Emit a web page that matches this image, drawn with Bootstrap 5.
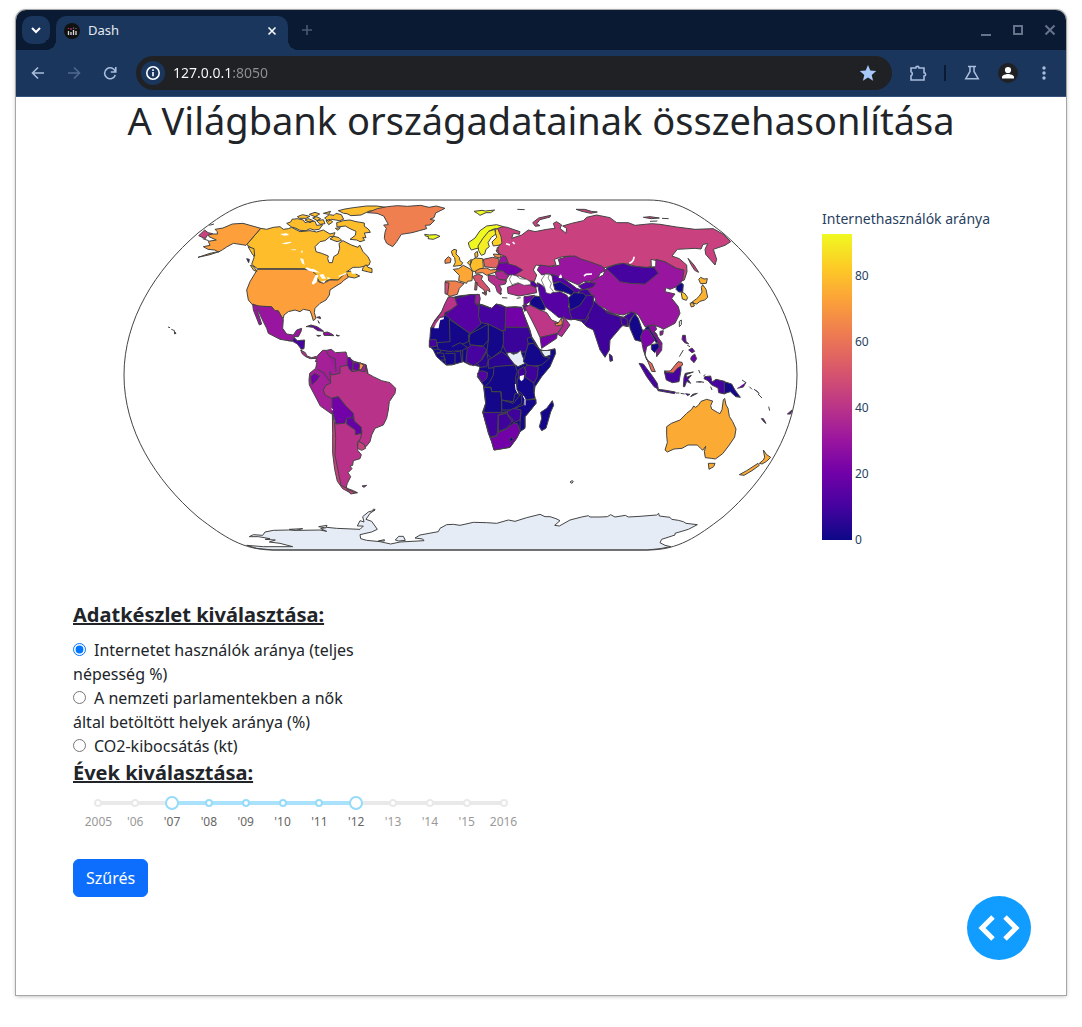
<!DOCTYPE html>
<html lang="hu">
<head>
<meta charset="utf-8">
<meta name="viewport" content="width=device-width, initial-scale=1">
<title>Dash</title>
<link href="https://cdn.jsdelivr.net/npm/bootstrap@5.3.0/dist/css/bootstrap.min.css" rel="stylesheet">
<style>
body{font-family:"Noto Sans",sans-serif;background:#fff}
.page-frame{min-height:100vh;padding:10px 16px 32px}
.browser{border-radius:10px 10px 0 0;box-shadow:0 0 0 1px #a6a6a6,0 1px 4px #0005}
.tabstrip{height:40px;background:#0a1a33;border-radius:10px 10px 0 0;padding-right:8px}
.tabstrip button,.toolbar button{border:0;background:none;padding:0;display:flex;align-items:center;justify-content:center;flex:none}
.tabstrip .tab-search{width:28px;height:28px;border-radius:10px;background:#1b365d;margin:0 6px}
.site-tab{position:relative;width:232px;height:34px;background:#1b365d;border-radius:10px 10px 0 0;color:#e3e9f3;font-size:13px;padding:0 8px 5px;align-self:flex-end}
.site-tab::before,.site-tab::after{content:"";position:absolute;bottom:0;width:10px;height:10px}
.site-tab::before{left:-10px;background:radial-gradient(circle at 0 0,#0a1a33 10px,#1b365d 10px)}
.site-tab::after{right:-10px;background:radial-gradient(circle at 100% 0,#0a1a33 10px,#1b365d 10px)}
.sq16{width:16px;height:16px}
.sq20{width:20px;height:20px}
.sq24{width:24px;height:24px}
.win-controls{gap:16px}
.toolbar{height:47px;background:#1b365d;border-bottom:1px solid #35507a;padding:0 12px 0 10px}
.nav-buttons{gap:12px;margin-right:14px}
.omnibox{height:34px;border-radius:17px;background:#202124;padding:0 12px 0 5px}
.omnibox .site-info{width:24px;height:24px;border-radius:50%;background:#1b365d}
.omnibox input{border:0;outline:0;font-size:14px;line-height:20px;padding:0;margin-left:8px;min-width:0;color:transparent;background:linear-gradient(90deg,#fff 60px,#8d9094 60px);-webkit-background-clip:text;background-clip:text}
.actions{gap:16px;margin-left:16px}
.divider{width:2px;height:16px;background:#0a1a33}
.app-title{font-size:38px;line-height:46px}
.chart-row{padding:47px 78px 0 104px;gap:22px}
.world{min-width:0;height:auto;display:block}
.legend-col{width:166px;flex:none;padding-top:19px;color:#2a3f5f}
.legend-title{font-size:14px;line-height:20px;white-space:nowrap}
.scale{height:306px;margin-top:5px}
.scale-bar{width:30px;background:linear-gradient(0deg,#0d0887,#46039f 11.1%,#7201a8 22.2%,#9c179e 33.3%,#bd3786 44.4%,#d8576b 55.6%,#ed7953 66.7%,#fb9f3a 77.8%,#fdca26 88.9%,#f0f921)}
.ticks{font-size:12px;margin:0 0 -33px 3px;line-height:66px}
.controls{padding:43px 57px 98px}
.group-title{font-size:20px;line-height:24px;font-weight:700;text-decoration:underline}
.options{padding:3px 0}
.dataset{max-width:293px}
.dataset input{margin:0 8px 0 0;width:13px;height:13px}
.years{position:relative;max-width:442px;margin:10px 0 0 7px}
.rail,.rail-on,.years input{position:absolute}
.rail{left:4.1667%;right:4.1667%;top:6px;height:4px;background:#e9e9e9}
.rail-on{left:20.8333%;width:41.6667%;top:6px;height:4px;background:#abe2fb}
.years input{appearance:none;left:calc(4.1667% - 7px);width:calc(91.6667% + 14px);top:1px;height:14px;background:none;margin:0;pointer-events:none}
.years input::-webkit-slider-thumb{appearance:none;pointer-events:auto;width:14px;height:14px;border:2px solid #96dbfa;border-radius:50%;background:#fff}
.year{position:relative;flex:1;text-align:center;font-size:12px;line-height:20px;color:#999;padding-top:4px}
.year::before{content:"";display:block;width:8px;height:8px;border:2px solid #e9e9e9;border-radius:50%;background:#fff;margin:0 auto 5px}
.year.on{color:#666}.year.on::before{border-color:#96dbfa}
.filter-btn{margin-top:27px}
.debug-btn{position:absolute;right:35px;bottom:35px;width:64px;height:64px;background:#119dff}
</style>
<script src="https://cdn.jsdelivr.net/npm/bootstrap@5.3.0/dist/js/bootstrap.bundle.min.js"></script>
</head>
<body>
<div class="page-frame d-flex flex-column">
<div class="browser flex-fill d-flex flex-column position-relative">
<header>
 <div class="tabstrip d-flex align-items-center">
  <button class="tab-search" aria-label="Lapok keresése"><svg width="12" height="12" fill="none" stroke="#fff" stroke-width="2"><path d="M2 4l4 4 4-4"/></svg></button>
  <div class="site-tab d-flex align-items-center">
   <svg class="sq16" viewBox="0 0 16 16"><circle cx="8" cy="8" r="8" fill="#111"/><path d="M4.500 8v4M7 9v3M9.500 7v5M12 8v4" stroke="#ddd" stroke-width="1.300"/><path d="M4.500 5v1M7 5v2" stroke="#b0306f" stroke-width="1.300"/><path d="M9.500 4.500v1.300M12 5v1" stroke="#777" stroke-width="1.200"/></svg>
   <span class="ms-2 me-auto">Dash</span>
   <button class="sq16" aria-label="Lap bezárása"><svg width="10" height="10" stroke="#f2f5fa" stroke-width="1.700"><path d="M1.500 1.500l7 7M8.500 1.500l-7 7"/></svg></button>
  </div>
  <button class="sq20 ms-2 me-auto" aria-label="Új lap"><svg width="24" height="12" viewBox="-1 0 12 12" stroke="#4a5a75" stroke-width="1.600"><path d="M1 6h10M6 1v10"/></svg></button>
  <div class="d-flex win-controls">
   <button class="sq16" aria-label="Kis méret"><svg width="16" height="16"><path d="M3 12h10v2H3z" fill="#66748a"/></svg></button>
   <button class="sq16" aria-label="Teljes méret"><svg width="16" height="16" fill="none" stroke="#66748a" stroke-width="2"><path d="M4 4h8v8H4z"/></svg></button>
   <button class="sq16" aria-label="Bezárás"><svg width="16" height="16" stroke="#66748a" stroke-width="2"><path d="M3.500 3.500l9 9M12.500 3.500l-9 9"/></svg></button>
  </div>
 </div>
 <div class="toolbar d-flex align-items-center">
  <div class="d-flex nav-buttons">
   <button class="sq24" aria-label="Vissza"><svg width="16" height="16" fill="none" stroke="#a9bddc" stroke-width="1.600"><path d="M14 8H3M8 2.500L2.500 8 8 13.500"/></svg></button>
   <button class="sq24" aria-label="Előre"><svg width="16" height="16" fill="none" stroke="#4f688f" stroke-width="1.600"><path d="M2 8h11M8 2.500L13.500 8 8 13.500"/></svg></button>
   <button class="sq24" aria-label="Újratöltés"><svg width="16" height="16" fill="none" stroke="#a9bddc" stroke-width="1.600"><path d="M13.300 6.500A5.500 5.500 0 1 0 13.300 10M13.800 2v5h-5"/></svg></button>
  </div>
  <div class="omnibox d-flex align-items-center flex-fill">
   <button class="site-info" aria-label="Webhely adatai"><svg width="16" height="16" fill="none" stroke="#fff" stroke-width="1.600"><circle cx="8" cy="8" r="6.200"/><path d="M8 7v4.200M8 4.300v1.600"/></svg></button>
   <input class="flex-fill" type="text" value="127.0.0.1:8050" aria-label="Cím">
   <button class="sq24" aria-label="Könyvjelző"><svg width="18" height="18" viewBox="0 0 18 18"><path d="M9 1l2.300 5.500 5.900.5-4.500 3.900 1.400 5.800L9 13.600l-5.100 3.100 1.400-5.800L.8 7l5.900-.5z" fill="#a8c7fa"/></svg></button>
  </div>
  <div class="d-flex align-items-center actions">
   <button class="sq20" aria-label="Bővítmények"><svg width="18" height="18" fill="none" stroke="#a9bddc" stroke-width="1.600"><path d="M2 4h4.800a1.600 1.600 0 0 1 3.200 0h5v4.800a1.600 1.600 0 0 1 0 3.200v4H2v-4.200a2.200 2.200 0 0 0 0-4z"/></svg></button>
   <span class="divider"></span>
   <button class="sq20" aria-label="Kísérletek"><svg width="16" height="16" fill="none" stroke="#a9bddc" stroke-width="1.500"><path d="M4 1.500h8M6 1.500v5L1.800 13.700h12.400L10 6.500v-5"/></svg></button>
   <button class="sq20" aria-label="Profil"><svg width="20" height="20"><circle cx="10" cy="10" r="10" fill="#202124"/><circle cx="10" cy="7" r="3.100" fill="#fff"/><path d="M4 15.500V14c0-2 4-3 6-3s6 1 6 3v1.500z" fill="#fff"/></svg></button>
   <button class="sq20" aria-label="Menü"><svg width="6" height="16" fill="#a9bddc"><circle cx="3" cy="3" r="1.700"/><circle cx="3" cy="8" r="1.700"/><circle cx="3" cy="13" r="1.700"/></svg></button>
  </div>
 </div>
</header>
<main class="flex-fill">
 <h1 class="app-title text-center fw-normal m-0">A Világbank országadatainak összehasonlítása</h1>
 <section class="chart-row d-flex">
 <svg class="world flex-fill" viewBox="0 0 2040 1110" fill="#14078a" stroke="#444" stroke-width="3" stroke-linejoin="round" role="img" aria-label="Internethasználók aránya világtérkép">
 <!-- North America -->
 <g transform="translate(480)">
  <path fill="#febd2a" d="M-58 115l18 3 20-6 20-2 10 8 15-2 10-4 25 13 30-3 20 4 20-6 20 12 15-4-5 12h-10l-15 12-15 3-15 15 3 15 17 5 20 8-2 8 4 12h10l4-18 13-8 5-17-2-15 12-8 15 8 10 5 20 7 5-7 10 20 15 15 7 15-4 10-28 7h-20l-20 14 30-6-2 12 12 6-15 6-20-4-15-2-15 12-25-2-20 10-10-2-10-16-35-24H-68l-17-13 7-20-2-25-20-14z"/>
  <path fill="#fd9f3a" d="M-68 238H75l20 4 15 13 5 20 15 5 20-10 25 0 15-15 10-5 5 12-15 10-5 6-20 12-15 10-2 15-10 15-18 10-15 15-2 13 5 17-8 7-5-17-5-13-20-4-10 7-15-5-20 5-13 10-2 10-7-7-8-10-7-6-6 3-7-13-15-2h-15l-27-5-13-15-5-30 10-25 15-25z"/>
  <g fill="#febd2a"><path d="M20 100l12-4 4-8 16-2 18 4 5 8 14-4 16 0 5 12 18-2-10 14-16 2-12-4-12 6-18-1-12-6-13-4zM75 90l10-4 15 6-10 6zM110 92l20-3 5 12-15 2zM138 92l12-4 8 8-12 8zM52 80l16-6 22 5-12 6-20 0zM88 73l17-6 14 5-14 8zM98 84l12-4 12 6-10 6zM130 70l22-6-6 9zM134 84l14-10 14 2 6-6 16 4 7 14-12 4-24-4-10 6zM175 62l20-5 25-4 40-5 30 0 28 4-30 10-20 1-25 12-30 2-12-6-10-1zM170 98l20-6 20-2 18 5 25 4 0 10 12 8 6 10-18 2 5 14-10 0 6 8-14 4-10-5-20-2 16-12 2-12-18-8-14-8-25 3zM150 147l12-8 15 4 8 8-14 4zM250 232l8-8 6 8 12 4 0 12-10-2-20-5zM166 115l15-2-7 8z"/></g>
  <g stroke="none" fill="#fff"><path d="M0 132l20-2 8 5-16 2zM5 160l25-5 5 3-20 5zM28 180l20-3-2 4zM68 180l-6 5 5 5zM60 205l10 2 4 18-8-5zM76 236l5-4 25 10-8 4zM80 240l20-4 20 12-16-2-15-3zM95 280l12-26 8 2-5 20-10 8zM118 254l12-2 8 14-12 0zM122 275l16-4-6 8zM140 262l14 2-10 4zM212 240l20-7 14 4-10 14-20 0zM176 257l25-10-3 6-22 8z"/></g>
  <path fill="#f07f4f" d="M262 68l30-12 30-6 30-3 30 2 40-3 25 6 22-4 26 7-28 14-5 14-12 5 14 3-14 14-14 1 4 10-22 6-22 6-32 5-14 22-12 15-18-10-7-15 2-18 4-12-8-10 14-1-4-8-10-18-20-8z"/>
  <path fill="#eff821" d="M434 133l14 2 20-1 12 5-20 9-16-2 2-6-10-2z"/>
  <g fill="#46039f"><path fill="#6a00a8" d="M78 410l15-5 18 5 14 9 6 5-18-2-14-10-15-2z"/><path fill="#8f0da4" d="M130 428l12-2 12 5 8 6-30-1zM110 436l10 1-5 2zM168 435l10 2-6 1zM110 382l10-2 2 6zM114 392l4 8z"/>
  <path d="M20 450l20-10 12 12 22-2-2 26-8 2-12-16-14-8-14-2z"/><path fill="#b52f8c" d="M62 480l14 8 5 10 14 5 14-4 2 6-20 1-14-6-10-8z"/></g>
 </g>
 <path fill="#fd9f3a" d="M422 115l-44 51-18-3-20-3-20 11-12 8-12 7-12-6-20-2-14-8 20-4-5-12 24-4-22-10-2-8 28 0-2-8-6-6 24-4 28-12 32-2zM270 190l-36 12 36-8 30-10z"/>
 <path fill="#98159f" d="M398 342l17 6 40 2 10 12h10l10 18 5 8-2 27 12 17 20 3 10-15 15-5-2 10-8 15h-13l-4 12h-13l-25-4-35-18-5-15-15-30-13-30 3 15 10 32-7 3-10-25-8-20z"/>
 <path fill="#c9427f" d="M236 137l18-17 10 8 14 3-16 5-6 10z"/>
 <path d="M268 106l14-4M248 146l18 6M144 411l6 2M154 418l10 4M163 424l5 6-4 2zM380 206l8 2-2 10z"/>
 <path fill="#febd2a" d="M391 226l8 2 12 16-10-3zM384 170l18 6 2 22-6-4z"/>
 <!-- South America -->
 <g transform="translate(510 420)">
  <path fill="#a51f99" d="M76 95l8-20 14-14 12 0 14-3 12 10 32-2 4 15 20 13 36 10 6 26-84 30-20 75-5 17-34-24-33-63-1-15 2-20 18-15 4-20z"/>
  <path fill="#a01a9c" d="M108 63l10 16 18 8 2 38M82 118l20 10 20 30"/>
  <path fill="#7201a8" d="M62 140l12-10 15 8-8 12-15 14z"/>
  <path fill="#b93289" d="M120 125l5 10 25-5v-20l25-5 10 20 20-3 20 3 3-20 4 25 18 10 25 12 25 6 17 17-2 15-17 25-3 25-5 25-10 20-25 10-10 20-5 20-12 15-23-18 10-22v-10l-23-30-2-20-25-25-20-25-20 5-20-10-5-15 8-15 14-5z"/>
  <path fill="#6a00a8" d="M172 84l8-2 10 18-4 22-8-4-6-14zM188 100l16-2 6 10-6 14-14-4z"/><path fill="#fa9b3d" d="M210 98l11 8-8 14-6-2z"/>
  <path fill="#c8417f" d="M127 250l7 30 6 40 0 50 8 50 8 42 18 14 16 6 12 6-22 0-22-12-16-22-8-36-6-48 0-60z"/>
  <path fill="#b93289" d="M134 278l40-2 20 20 22 8-4 20-10 18 2 20 10 12-4 12-20 6-2 14-8 2 6 8-12 12 8 12-10 20-4 14-15-8-8-40-10-50 2-50z"/>
  <path fill="#7201a8" d="M126 205l19-5 20 25 25 25 2 22-22-6-6 14-26 2-12-40z"/><path fill="#6600a7" d="M170 266l18-4 6 12 20 18 0 18-18 4 0-14-26-18z"/>
  <path fill="#c8417f" d="M204 333l18 10 5 12-12 6-12-6z"/>
  <path fill="#c8417f" d="M170 476l20 10 12 2-20 4z"/><path d="M216 468l14-2-8 6zM248 538h8M85 16l8 1M138 16l10 1" fill="#9c179e"/><path stroke="none" fill="#fff" d="M123 234l6 4-2 4z"/>
 </g>
 <!-- Africa -->
 <g transform="translate(900)">
  <path d="M85 322l15 0 15-4 35-4 25-1 5 12-2 17 12 3 25 10 13-13 17 3 13 7 27-2 20 2 5 18 20 50 5 20 10 15 13 23 17 5 30-7 2 14-17 40-25 30-20 30-3 20 6 30-20 25-13 15v30l-15 15-10 20-20 27-35 6-13 2-7-25-10-25-17-65 9-25-5-40-2-15-18-25 4-15 4-15-20-5h-10l-20-10-35 10H78l-28-25-10-20-12-12 2-28 2-25 13-25 20-25z"/>
  <path fill="#b93389" d="M86 320l14 2 12 4v19l-17 13-20 10-3 12-12 2-15 28-13 5 8-15 25-35 10-25z"/>
  <path fill="#fff" stroke="none" d="M60 384l12-2-1 6-10 2-3 12-2 13-14 0 6-14z"/>
  <path fill="#5601a4" d="M105 326l45-12h17l-2 26 10 8 3 37 5 17-33 28-15-10-60-45 20-17 17-13z"/>
  <path fill="#a01a9c" d="M167 315l11-2 2 12-4 20-11-7z"/>
  <path fill="#46039f" d="M178 344l37 11 13-13 30 10-3 70h-10l-40-20-22-4-8-18z"/>
  <path fill="#7201a8" d="M258 352h47l5 18 15 42h-69z"/><path fill="#3a049a" d="M256 412h69l10 28-10 20-5 25-20 3-40 2-12-25 2-25-5-18 11 0z"/>
  <path fill="#e5ecf6" d="M260 490l10-3 10 6 14-5 8-8 4 14 10 26-22 10-19-12z"/>
  <path d="M325 462l15-2 18 18 12 22 20 3-25 22-35 5-20-15 8-30zM322 445l10-4 26 36-18-17-16 0z"/><path fill="#e5ecf6" d="M362 482l30-1v14l-17 6z"/>
  <path d="M205 402l45 23v35l-5 20-30 25-15-15 5-40zM145 435l60-33v48l-15 18-40-3zM88 388l47 32 15 12-5 23-35 15-15 15-40-5-5-22 40-3zM75 490h30v32l-25 3M107 486l14-4 4 34M128 482v34"/>
  <path fill="#46039f" d="M142 475l13-10 35 5 10 10-20 35-20 12-22-12zM28 450l20-2 4 20-24 4z"/><path d="M50 488l20 2 6 20-14 0M96 470l24-12 22 14-16 10-26 2M40 478l20 0 2 8-12 6M62 500l10 0 6 24"/>
  <path fill="#2a0593" d="M200 485l5 25-5 20-20 2-8-12 13-10zM205 510l40-25 20 15 20 25-45 5-35 5z"/><path fill="#5302a3" d="M172 550l13-8 18 6-3 17-15 13z"/>
  <path d="M222 530l63-5 7 20-5 15 1 40 12 15-20 25-35-10-3-25h-27l-2-13h-21l18-17 10-20zM192 592h21l2 13h28l2 25v38h-55l7-28zM245 630l35 5 5-25 20 5v25l-30 20h-30zM292 565l26-5 24 20v28l3 17-25 5-15-20-15-10z"/>
  <path fill="#3f039c" d="M315 535l5-10 35 5-3 30-10 20-27-20 3-15zM295 540l17-10 6 15-5 15-18 2z"/>
  <path d="M315 630l33-2v12l-20 25-13 15v35l-15 10v-25l3-35-18-10 25-10z"/><path fill="#3f039c" d="M188 667h57l18-2-28 10-3 60-22 7-5-17zM235 675l25-5 20 20-20 25-25 10zM262 665l18-10 23 5-3 30-20 8-15-18z"/>
  <path fill="#7201a8" d="M210 742l20-2 2-12 26-10 22-18 12 0 8 25-10 20-20 27-35 6-13 2-7-25z"/><path d="M268 748l7-7 5 7-8 7zM397 632l4 14-9 20-14 49-13 7-7-12 7-25-3-18 18-12z"/>
  <path fill="#fff" stroke="none" d="M300 558l12-3-1 13-7 6-5-6z"/><path fill="none" stroke="#fff" d="M286 582l2 16 6 12M310 618l5 10 0 18"/>
  <!-- Europe -->
  <g>
  <path fill="#eff821" d="M145 158l20-14 15-22 20-14 30-4 20 6-4 8-22-2-18 8-12 24-8 24-18 4-14 4-6-10zM162 64l24-3 10 2 28-3-12 8-14 0-18 8-8-6z"/>
  <path fill="#f3ee24" d="M206 124l18-6 4 14-14 10-10 16 4 12-10 8-4 14-10 4-8-14-2-14 14-22z"/>
  <path fill="#fcd025" d="M226 118l16-4 6 8 2 20 10 14-12 8-28 4-4-12 14-14-4-14z"/>
  <path fill="#febd2a" d="M94 184l8-6 8 2-2 12 10 10 2 10 8 6-4 8-24 3 6-12-2-14-6-6zM156 210l10-6 22 2 2 26-10 12-22 0-8-16zM164 190l8-6 2 14-8 6zM142 218l12-10-4 18z"/>
  <path fill="#f48849" d="M75 210l10-10 8 6-2 12-16 2z"/><path fill="#fca636" d="M100 238l16-2 14-10 22 12 6 8-2 26-14 2-2 6-24-8 2-16z"/>
  <path fill="#f07f4f" d="M76 273l30 0 26 8-14 14-6 18-22 6-12-8z"/><path fill="#d3517a" d="M75 277l12 2-4 34-8-2z"/>
  <path fill="#d3536d" d="M158 260l16-8 14 6-4 10 24 28 2 10-8-6-6 10-4-10-16-12-10-14zM186 308l14 0-2 8zM166 276l6 2-2 22-6 0z"/>
  <path fill="#e1645f" d="M190 208l28-6 18 4 2 22-14 6-30-4z"/><path fill="#f68d45" d="M180 236l20-2 12 6 20-2-4 8-28 10-12-8-22 2 2-8zM232 172l20 2-4 8-18 0zM228 182l22 2 4 10-20-4zM220 192l24 2-4 10-16-4z"/>
  <path fill="#98159f" d="M242 202l16-10 14 14-4 12-32 2z"/><path fill="#7201a8" d="M236 220l34-2 26 8 24 14-10 14-18 4-2 6-14-10-12 2-14-12-22-4z"/>
  <path fill="#ad2793" d="M226 246l20-4 12 10 8 6-8 12-24-2-6-12z"/><path fill="#b52f8c" d="M204 256l20 0 12 12 24 4-4 10-18 4 6 10-2 18-10-8-6-18-20-16zM262 292l34-12 24 4 26 0 4 24-30 6-24 4-32-8z"/>
  <path d="M246 323l16 1M290 325l12-2M240 308l6 4M292 58l22 1M298 255l14-2"/>
  </g>
  <!-- Russia and central Asia -->
  <path fill="#c9427f" d="M250 110l12 2 23 8 15 5-2 8-18-3-5 15 30-10 20-15 20 5 35-7 25-3-5-15 10-5 15 10-5 10 18 15 2-15-12-7 27-8 35-8 10-10 30-7 40 8 20 15 35 0 20 8 50-5 25 2 50 8 55 7 55-2 30 17 22 22-17 11-35 12 10 30-5 17-28-32-2-15 8-17-14 2-6 14-18-2-53 3-16 20 22 8 22 19 1 20-8 25-13 5v-35l-22-5-35-20-30-7 1 22-26 5-45-13h-30l-45 13-15-7-45-16-15-4-20-10-25 2-25 8 5 17-25 5-35-5-8 15 10 15-7 20-15-3-30-14-18 0 28-18-20-12-22-6-8-22-20-8-5-12 5-15 8-5-3-20-10-25z"/>
  <path fill="#c9427f" d="M338 98l18-14 36-8-2 5-30 8-10 12 10 6-14 2zM468 58l26 0 20 6 18 2-20 4-26-6zM670 82l20-2 28 4-24 2zM726 85l20 1M690 94l22-1M804 205l18 20 14 22-12-6-10-16z"/>
  <path fill="none" stroke="#fff" stroke-width="5" d="M258 161l12 4M278 156l6 6M642 200q0 14-14 20"/>
  <path fill="#98159f" d="M352 240l8-15 35 5 25-5-5-17 25-8 25-2 20 10 15 4 45 16 13 12-18 10-5 12-10 10-35 3-15 10-45-20-30-5-15-10-20 5z"/>
  <g transform="translate(480)">
  <path fill="#98159f" d="M25 290l5-15 40-20 5-15 28-12 100 4 24-2 1-22 27 7 35 20 22 5-4 30-18 20-20 8-12-5-3 12 30 7-10 13 20 25 5 20-15 30-35 18-10-6-20-7-25 5-20-35-20-10-25 10-35-5-20-15-25-10-5-20-20-25z"/>
  <path fill="#46039f" d="M78 235l27-10 25-5 25 8 45 5 22-1 13 18-40 32-45-2-30-5-20-20z"/>
  <path fill="#3f039c" d="M0 300l22-2 18 22 0 10 15 15 20 15 25 12 30 10 25-17 10 5-15 20-5 20-15-5-10 10-30 35-2 30-13 22-15-22-20-60-20-10-16-16-20-6-16 0z"/>
  <path fill="none" d="M40 332l-6 16-14 20 6 16-14 18M75 360l4 8 52 16M122 384l4 22 16 4 0-22-14-8"/><path fill="#46039f" d="M88 492l8 6 2 14-8 2z"/>
  <path d="M148 400l7-15 10-13 10 13 10 30 5 10-8 15 3 15-20-5-15-35zM196 414l10-8 10 12 14 14 8 24-10 2-14-26-16-4zM214 464l22-4 2 14-14 14-10-10z"/>
  <path fill="#7e03a8" d="M182 440l8-20 15-3 10 18 10 15-12 13-13 7-5 25 10 20-5-5-10-30z"/><path fill="#8a0fa1" d="M205 408l20-3 5 13-8 7 24 34-1 22-15 19-1-18 10-12-8-20-16-24z"/><path fill="#98159f" d="M240 424l10-2-2 12-8 2z"/>
  <path fill="#e56b5d" d="M202 510l13 10 11 25-11-1z"/><path fill="#fff" d="M298 394l6-4 0 14-6 6z"/>
  <path d="M290 288l14-10 6 6-2 22-12 0-8-8z"/><path fill="#fcc627" d="M303 305l12 6 8 12-4 8-12-4z"/><path fill="#fdb130" d="M368 284L378 298 383 322 374 330 360 334 350 342 334 338 350 326 358 318 366 306 364 292ZM356 268L362 262 372 267 382 266 379 280 362 281ZM330 340L340 337 343 348 334 351Z"/>
  <path fill="#6a00a8" d="M308 436l8 0 2 18 8 8-12-4-8-10zM298 500l12-20M322 466l8 4M326 480l10-6 8 10-8 4zM334 500l10-8 6 14-8 12-10-10z"/>
  </g>
  <!-- Middle East -->
  <path fill="#5601a4" d="M352 278l13 7 15 15 18 8 22-3 20 10 10 15-5 20 15 25-5 15-40-8-20-17-20-15-15-30zM395 252l35 13 40 30 15 5-20 12-25-22-25-15-15 5zM475 288l25-12 28 4-10 12-30 8zM320 276l20-2 16 14-10 4-18-8z"/>
  <path d="M400 282l20-7 25 15 18 15-8 10-25-10-25-5zM445 325l15-17 30 2 10 10-20 25-15 17-15-2zM330 330l15-12 15 2 15 30v10h-15l-30-15z"/><path fill="#3f039c" d="M456 388l-8-26 32-16 20-30 20 0 0 28-24 46z"/>
  <path fill="#7201a8" d="M312 320l32-4-14 18-18 14zM308 346l12-2 8 8-14 12zM360 442l52-12-2 15-45 30z"/>
  <path fill="#bd3786" d="M315 352l15-7 30 15 20 8 15 22 35 15-18 25-52 12-10-22-15-30z"/><path fill="#b12a90" d="M430 378l20 27-25 35-13-8 16-22z"/><path fill="#f68d45" d="M404 400l10 0 11-16 2 20-18 4z"/>
  <path fill="#fff" stroke="#444" stroke-width="2" d="M376 252l12 2-4 10 10 16-4 12 10 12-8 8-14-4-4-16-10-22zM268 268l8-14 14 4 10 8 20 2 12 8 0 8-20 2-18-8-18 6z"/>
  <path fill="none" stroke="#fff" stroke-width="5" d="M418 264l4-8 2 8M492 258l6-5 18-1"/>
 </g>
 <!-- Indonesia and Oceania -->
 <g transform="translate(1530 390)" fill="#46039f">
  <path d="M27 130l13 2 25 33 17 25 3 18-13-8-22-30zM82 208l20 2 34 6-2 5-50-9zM138 219h10M152 220l12 2M166 221l14 2-8 4M182 230l20-10-14 3zM103 155l18 4 18-14 14-6 0 12-6 34-20 3-18-8zM162 172l4-12 24-4-22 8 2 8 14-6-10 12 8 12-12-6-6 16-4 0zM206 150l4 10M198 186l14-1 10 2M224 170l18-2 4 18 12-8 26 6 0 38-18-4-2-14-20-10-10-12-12-6z"/>
  <path fill="#e56b5d" d="M103 153l18 0 23-28 12 2 2 8-16 10-12 14-18-2z"/><path fill="#14078a" d="M283 185l22 7 10 18 16 22-14-2-16-15-18 6z"/>
  <path fill="#7201a8" d="M322 205l18-4 8-14M336 180l12 8M358 200l8 8M372 208l10 6 6 8M384 222l12 12M416 260l3 12M472 282l14-12-4 12zM394 296l6 0 8 14-4-2zM242 200l4 10M220 168l6-4M205 186h8"/>
  <path fill="#fbab34" d="M110 320l14-10 26-10 20-20 15-12 6-10 6 4 8-6 8-12 17-6 18 5-6 14 3 10 17 10 8 4 6-12 4-30 4-4 4 20 6 10 4 24 10 16 10 22-4 24-16 24-20 26-22 16-12-2-18-2-3-18 4-16-9 12-6-6-10-10-28 0-18 10-24 2-20 9-7-6 7-22-2-22zM235 430l20 0-4 10-14 8zM328 464l22-12 34-22 4 6-22 16-24 14zM388 430l12-10 4-8-4-22 10 14 12 8-12 12-14 8z"/>
 </g>
 <path d="M1350 876l6-4 4 2-4 6z" fill="#e5ecf6"/>
 <!-- Antarctica -->
 <path transform="translate(300 870)" fill="#e5ecf6" d="M80 196L130 200 218 200 180 190 148 186 166 180 135 178 150 176 115 170 88 170 100 164 128 166 135 156 160 151 205 150 240 151 300 150 320 154 302 146 320 142 350 145 420 148 430 138 412 138 420 122 432 126 428 110 445 96 465 90 450 100 438 118 455 124 472 148 455 156 420 164 422 176 440 181 480 185 512 192 540 186 612 182 608 177 585 174 600 165 655 155 660 145 680 134 700 133 720 136 760 127 800 128 830 130 865 120 885 124 920 113 960 103 975 110 990 110 1008 116 1020 122 1004 136 1018 138 1050 120 1085 111 1105 107 1110 111 1140 111 1162 110 1172 104 1185 111 1216 106 1225 111 1260 109 1310 105 1316 100 1318 108 1350 112 1355 118 1375 121 1390 125 1398 130 1432 134 1405 148 1365 160 1365 165 1325 178 1320 188 1335 196 1352 200 1320 206 1280 210 160 210 110 205Z"/>
 <path fill="#e5ecf6" d="M596 1010l25-4-4 8zM508 1018l40-2-20 5zM826 1050l10-11 14 0 6 12-20 2zM775 1053l18-4v4z"/>
 <path fill="none" d="M459 30H1584C1674 30 1731 69 1809 129 1938 240 2031 390 2031 555S1938 870 1809 981C1731 1041 1674 1080 1584 1080H459C369 1080 312 1041 234 981 105 870 12 720 12 555S105 240 234 129C312 69 369 30 459 30z"/>
 </svg>
 <aside class="legend-col">
  <div class="legend-title">Internethasználók aránya</div>
  <div class="scale d-flex"><div class="scale-bar"></div>
   <div class="ticks align-self-end"><div>80</div><div>60</div><div>40</div><div>20</div><div>0</div></div></div>
 </aside>
 </section>
 <form class="controls" onsubmit="return false">
  <div class="dataset" role="radiogroup" aria-labelledby="ds">
   <h2 id="ds" class="group-title">Adatkészlet kiválasztása:</h2>
   <div class="options"><label class="d-block"><input type="radio" name="d" checked>Internetet használók aránya (teljes népesség %)</label>
   <label class="d-block"><input type="radio" name="d">A nemzeti parlamentekben a nők által betöltött helyek aránya (%)</label>
   <label class="d-block"><input type="radio" name="d">CO2-kibocsátás (kt)</label></div>
  </div>
  <h2 class="group-title mb-0">Évek kiválasztása:</h2>
  <div class="years">
   <div class="rail"></div><div class="rail-on"></div>
   <div class="d-flex"><span class="year">2005</span><span class="year">'06</span><span class="year on">'07</span><span class="year on">'08</span><span class="year on">'09</span><span class="year on">'10</span><span class="year on">'11</span><span class="year on">'12</span><span class="year">'13</span><span class="year">'14</span><span class="year">'15</span><span class="year">2016</span></div>
   <input type="range" min="2005" max="2016" value="2007" aria-label="Kezdő év"><input type="range" min="2005" max="2016" value="2012" aria-label="Záró év">
  </div>
  <button class="btn btn-primary filter-btn" type="submit">Szűrés</button>
 </form>
</main>
<button class="debug-btn btn border-0 rounded-circle p-0 d-flex align-items-center justify-content-center" aria-label="Fejlesztői eszközök"><svg width="44" height="28" fill="none" stroke="#fff" stroke-width="5"><path d="M16 3L5 14l11 11M28 3l11 11-11 11"/></svg></button>
</div>
</div>
</body>
</html>
